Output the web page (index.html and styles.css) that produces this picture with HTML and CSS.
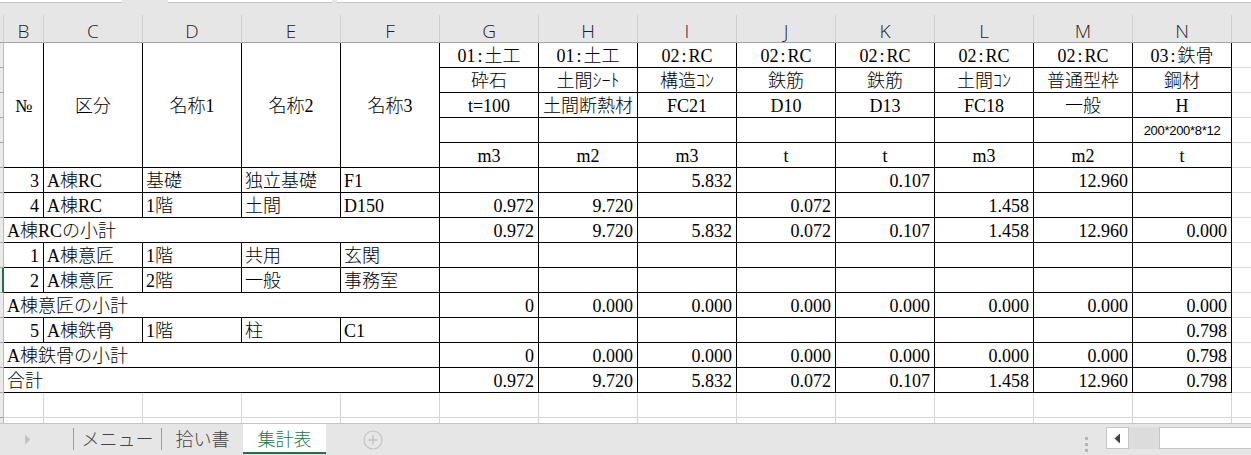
FILE: index.html
```html
<!DOCTYPE html>
<html lang="ja">
<head>
<meta charset="utf-8">
<title>集計表</title>
<link rel="stylesheet" href="styles.css">
</head>
<body>
<div class="app">
  <div class="topbar">
    <div class="fbox fbox-name"></div>
    <div class="fbox fbox-mid"></div>
    <div class="fbox fbox-formula"></div>
  </div>

  <div class="sheet">
    <!-- column letters -->
    <div class="rh rh-corner"></div>
    <div class="h">B</div><div class="h">C</div><div class="h">D</div><div class="h">E</div><div class="h">F</div>
    <div class="h">G</div><div class="h">H</div><div class="h">I</div><div class="h">J</div><div class="h">K</div>
    <div class="h">L</div><div class="h">M</div><div class="h">N</div><div class="h h-last"></div>

    <!-- header block row 1 -->
    <div class="rh"></div>
    <div class="c m">№</div><div class="c m">区分</div><div class="c m">名称1</div><div class="c m">名称2</div><div class="c m">名称3</div>
    <div class="c ctr">01<span class="colon">:</span>土工</div><div class="c ctr">01<span class="colon">:</span>土工</div>
    <div class="c ctr">02<span class="colon">:</span>RC</div><div class="c ctr">02<span class="colon">:</span>RC</div>
    <div class="c ctr">02<span class="colon">:</span>RC</div><div class="c ctr">02<span class="colon">:</span>RC</div>
    <div class="c ctr">02<span class="colon">:</span>RC</div><div class="c ctr">03<span class="colon">:</span>鉄骨</div>
    <div class="o"></div>
    <!-- row 2 -->
    <div class="rh"></div>
    <div class="c ctr">砕石</div><div class="c ctr">土間ｼｰﾄ</div><div class="c ctr">構造ｺﾝ</div><div class="c ctr">鉄筋</div>
    <div class="c ctr">鉄筋</div><div class="c ctr">土間ｺﾝ</div><div class="c ctr">普通型枠</div><div class="c ctr">鋼材</div>
    <div class="o"></div>
    <!-- row 3 -->
    <div class="rh"></div>
    <div class="c ctr">t=100</div><div class="c ctr">土間断熱材</div><div class="c ctr">FC21</div><div class="c ctr">D10</div>
    <div class="c ctr">D13</div><div class="c ctr">FC18</div><div class="c ctr">一般</div><div class="c ctr">H</div>
    <div class="o"></div>
    <!-- row 4 -->
    <div class="rh"></div>
    <div class="c"></div><div class="c"></div><div class="c"></div><div class="c"></div>
    <div class="c"></div><div class="c"></div><div class="c"></div><div class="c ctr small">200*200*8*12</div>
    <div class="o"></div>
    <!-- row 5 -->
    <div class="rh"></div>
    <div class="c ctr">m3</div><div class="c ctr">m2</div><div class="c ctr">m3</div><div class="c ctr">t</div>
    <div class="c ctr">t</div><div class="c ctr">m3</div><div class="c ctr">m2</div><div class="c ctr">t</div>
    <div class="o"></div>

    <!-- data: 3 -->
    <div class="rh"></div>
    <div class="c r">3</div><div class="c">A棟RC</div><div class="c">基礎</div><div class="c">独立基礎</div><div class="c">F1</div>
    <div class="c r"></div><div class="c r"></div><div class="c r">5.832</div><div class="c r"></div>
    <div class="c r">0.107</div><div class="c r"></div><div class="c r">12.960</div><div class="c r"></div>
    <div class="o"></div>
    <!-- 4 -->
    <div class="rh"></div>
    <div class="c r">4</div><div class="c">A棟RC</div><div class="c">1階</div><div class="c">土間</div><div class="c">D150</div>
    <div class="c r">0.972</div><div class="c r">9.720</div><div class="c r"></div><div class="c r">0.072</div>
    <div class="c r"></div><div class="c r">1.458</div><div class="c r"></div><div class="c r"></div>
    <div class="o"></div>
    <!-- subtotal RC -->
    <div class="rh"></div>
    <div class="c sub">A棟RCの小計</div>
    <div class="c r">0.972</div><div class="c r">9.720</div><div class="c r">5.832</div><div class="c r">0.072</div>
    <div class="c r">0.107</div><div class="c r">1.458</div><div class="c r">12.960</div><div class="c r">0.000</div>
    <div class="o"></div>
    <!-- 1 -->
    <div class="rh"></div>
    <div class="c r">1</div><div class="c">A棟意匠</div><div class="c">1階</div><div class="c">共用</div><div class="c">玄関</div>
    <div class="c r"></div><div class="c r"></div><div class="c r"></div><div class="c r"></div>
    <div class="c r"></div><div class="c r"></div><div class="c r"></div><div class="c r"></div>
    <div class="o"></div>
    <!-- 2 (active row) -->
    <div class="rh rh-active"></div>
    <div class="c r">2</div><div class="c">A棟意匠</div><div class="c">2階</div><div class="c">一般</div><div class="c">事務室</div>
    <div class="c r"></div><div class="c r"></div><div class="c r"></div><div class="c r"></div>
    <div class="c r"></div><div class="c r"></div><div class="c r"></div><div class="c r"></div>
    <div class="o"></div>
    <!-- subtotal 意匠 -->
    <div class="rh"></div>
    <div class="c sub">A棟意匠の小計</div>
    <div class="c r">0</div><div class="c r">0.000</div><div class="c r">0.000</div><div class="c r">0.000</div>
    <div class="c r">0.000</div><div class="c r">0.000</div><div class="c r">0.000</div><div class="c r">0.000</div>
    <div class="o"></div>
    <!-- 5 -->
    <div class="rh"></div>
    <div class="c r">5</div><div class="c">A棟鉄骨</div><div class="c">1階</div><div class="c">柱</div><div class="c">C1</div>
    <div class="c r"></div><div class="c r"></div><div class="c r"></div><div class="c r"></div>
    <div class="c r"></div><div class="c r"></div><div class="c r"></div><div class="c r">0.798</div>
    <div class="o"></div>
    <!-- subtotal 鉄骨 -->
    <div class="rh"></div>
    <div class="c sub">A棟鉄骨の小計</div>
    <div class="c r">0</div><div class="c r">0.000</div><div class="c r">0.000</div><div class="c r">0.000</div>
    <div class="c r">0.000</div><div class="c r">0.000</div><div class="c r">0.000</div><div class="c r">0.798</div>
    <div class="o"></div>
    <!-- total -->
    <div class="rh"></div>
    <div class="c sub">合計</div>
    <div class="c r">0.972</div><div class="c r">9.720</div><div class="c r">5.832</div><div class="c r">0.072</div>
    <div class="c r">0.107</div><div class="c r">1.458</div><div class="c r">12.960</div><div class="c r">0.798</div>
    <div class="o"></div>

    <!-- empty rows -->
    <div class="rh"></div>
    <div class="g"></div><div class="g"></div><div class="g"></div><div class="g"></div><div class="g"></div><div class="g"></div>
    <div class="g"></div><div class="g"></div><div class="g"></div><div class="g"></div><div class="g"></div><div class="g"></div><div class="g"></div>
    <div class="o"></div>
    <div class="rh"></div>
    <div class="g"></div><div class="g"></div><div class="g"></div><div class="g"></div><div class="g"></div><div class="g"></div>
    <div class="g"></div><div class="g"></div><div class="g"></div><div class="g"></div><div class="g"></div><div class="g"></div><div class="g"></div>
    <div class="o"></div>
  </div>

  <div class="tabbar">
    <div class="nav">
      <svg class="nav-arrow" width="7" height="11" viewBox="0 0 7 11"><path d="M1 0.5 L6.5 5.5 L1 10.5 Z" fill="#c4c4c4"/></svg>
    </div>
    <div class="sep"></div>
    <div class="tab tab-menu">メニュー</div>
    <div class="sep"></div>
    <div class="tab tab-pick">拾い書</div>
    <div class="tab tab-active">集計表</div>
    <div class="addsheet">
      <svg width="20" height="20" viewBox="0 0 20 20"><circle cx="10" cy="10" r="9" fill="none" stroke="#c2c2c2" stroke-width="1.2"/><path d="M10 5.5 V14.5 M5.5 10 H14.5" stroke="#c2c2c2" stroke-width="1.4"/></svg>
    </div>
    <div class="spacer"></div>
    <div class="dots">
      <svg width="4" height="16" viewBox="0 0 4 16"><rect x="0" y="0" width="3" height="3" fill="#b5b5b5"/><rect x="0" y="6" width="3" height="3" fill="#b5b5b5"/><rect x="0" y="12" width="3" height="3" fill="#b5b5b5"/></svg>
    </div>
    <div class="hscroll">
      <div class="hs-btn">
        <svg width="7" height="11" viewBox="0 0 7 11"><path d="M6 0.5 L0.5 5.5 L6 10.5 Z" fill="#444"/></svg>
      </div>
      <div class="hs-track"></div>
      <div class="hs-thumb"></div>
    </div>
  </div>
</div>
</body>
</html>
```

FILE: styles.css
```css
html, body {
  margin: 0;
  padding: 0;
  background: #ffffff;
}

body {
  font-family: "Liberation Serif", "Noto Sans CJK JP", serif;
  color: #000;
}

.app {
  width: 1251px;
  height: 455px;
  overflow: hidden;
  display: flex;
  flex-direction: column;
  background: #e6e6e6;
}

/* formula bar remnants */
.topbar {
  height: 15px;
  flex: none;
  display: flex;
  align-items: flex-start;
  background: #e6e6e6;
}
.fbox {
  height: 2px;
  background: #ffffff;
  border-bottom: 1px solid #c6c6c6;
}
.fbox-name { width: 122px; }
.fbox-mid { width: 164px; margin-left: 46px; }
.fbox-formula { flex: 1; margin-left: 5px; }

/* sheet grid */
.sheet {
  height: 408px;
  flex: none;
  overflow: hidden;
  background: #ffffff;
  display: grid;
  grid-template-columns: 4px 40px repeat(12, 99px) 1fr;
  grid-template-rows: 28px;
  grid-auto-rows: 25px;
}

.sheet > div {
  box-sizing: border-box;
  min-width: 0;
}

/* column letter header */
.h {
  background: #e6e6e6;
  border-right: 1px solid #cfcfcf;
  border-bottom: 1px solid #a3a3a3;
  text-align: center;
  font-family: "Open Sans", "Liberation Sans", sans-serif;
  font-weight: 300;
  font-size: 19px;
  line-height: 22px;
  padding-top: 5px;
  color: #1e1e1e;
}
.h-last { border-right: none; }

/* row header strip */
.rh {
  background: #e9e9e9;
  border-right: 1px solid #bdbdbd;
  border-bottom: 1px solid #a5a5a5;
}
.rh-corner {
  background: #e6e6e6;
  border-right: 1px solid #cfcfcf;
  border-bottom: 1px solid #a3a3a3;
}
.rh-active {
  border-right: 2px solid #217346;
}

/* cells */
.c {
  border-right: 1px solid #000;
  border-bottom: 1px solid #000;
  font-size: 18px;
  font-weight: 300;
  line-height: 24px;
  padding: 1px 3px 0 3px;
  white-space: nowrap;
  overflow: hidden;
}
.ctr { text-align: center; padding-left: 0; padding-right: 0; }
.r { text-align: right; padding-right: 4px; }
.m {
  grid-row: span 5;
  display: flex;
  align-items: center;
  justify-content: center;
  padding: 2px 0 0 0;
}
.sub { grid-column: span 5; }
.small {
  font-family: "Liberation Sans", sans-serif;
  font-size: 13px;
  letter-spacing: -0.3px;
}
.colon {
  padding: 0 2px;
}

/* gridline cells */
.g {
  border-right: 1px solid #d4d4d4;
  border-bottom: 1px solid #d4d4d4;
}
.o {
  border-bottom: 1px solid #dadada;
}

/* sheet tabs */
.tabbar {
  height: 32px;
  flex: none;
  box-sizing: border-box;
  border-top: 1px solid #c6c6c6;
  background: #e6e6e6;
  display: flex;
  align-items: flex-start;
  font-family: "Noto Sans CJK JP", sans-serif;
  font-weight: 300;
  font-size: 18px;
  color: #444;
}
.nav {
  width: 73px;
  height: 30px;
  display: flex;
  align-items: center;
  padding-left: 24px;
  box-sizing: border-box;
}
.sep {
  width: 1px;
  height: 22px;
  margin-top: 4px;
  background: #9c9c9c;
}
.tab {
  height: 28px;
  line-height: 28px;
  text-align: center;
}
.tab-menu { width: 87px; }
.tab-pick { width: 81px; }
.tab-active {
  width: 83px;
  height: 28px;
  background: #ffffff;
  color: #217346;
  border-bottom: 2px solid #217346;
}
.addsheet {
  margin-left: 37px;
  margin-top: 5px;
  width: 20px;
  height: 20px;
}
.spacer { flex: 1; }
.dots {
  width: 4px;
  height: 16px;
  margin-top: 8px;
  margin-right: 17px;
}
.hscroll {
  display: flex;
  margin-top: 3px;
  height: 22px;
}
.hs-btn {
  width: 23px;
  height: 22px;
  box-sizing: border-box;
  background: #ffffff;
  border: 1px solid #c6c6c6;
  display: flex;
  align-items: center;
  justify-content: center;
}
.hs-track {
  width: 30px;
  height: 22px;
  background: #dcdcdc;
}
.hs-thumb {
  width: 92px;
  height: 22px;
  box-sizing: border-box;
  background: #ffffff;
  border: 1px solid #c6c6c6;
  border-right: none;
}
```
